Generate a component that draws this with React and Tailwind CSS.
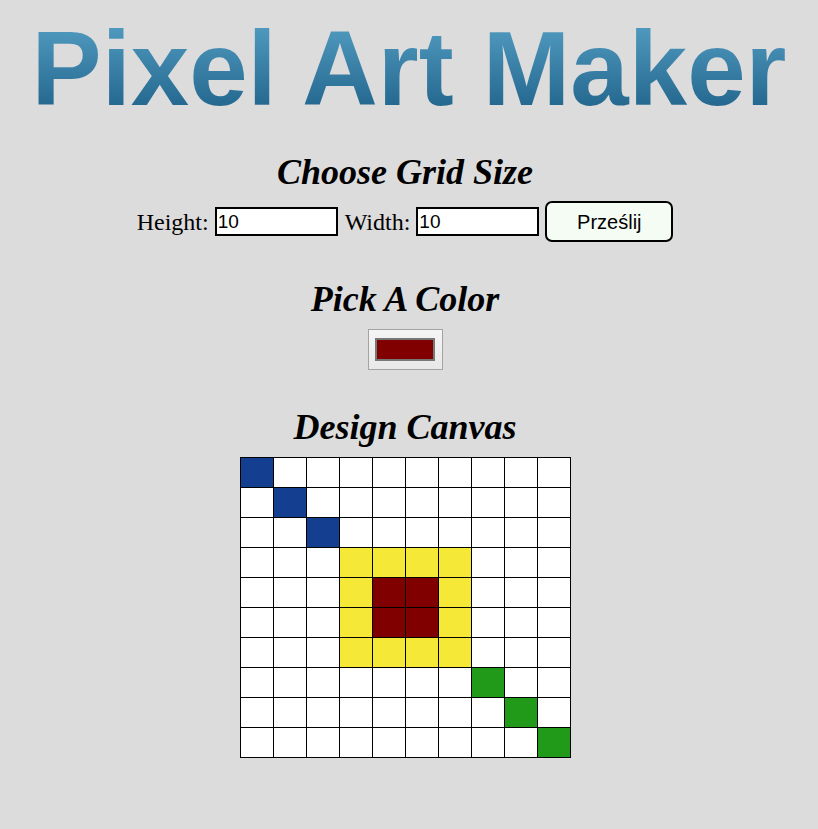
import React from "react";

const BLUE = "#143f91";
const YELLOW = "#f5e837";
const RED = "#800000";
const GREEN = "#219a19";

function cellColor(r, c) {
  if (r === c && r < 3) return BLUE;
  if (r === c && r > 6) return GREEN;
  if (r >= 4 && r <= 5 && c >= 4 && c <= 5) return RED;
  if (r >= 3 && r <= 6 && c >= 3 && c <= 6) return YELLOW;
  return "#ffffff";
}

const SANS = '"Liberation Sans", Arial, sans-serif';

export default function App() {
  const rows = Array.from({ length: 10 }, (_, r) => r);
  return (
    <div className="min-h-[829px] w-full bg-[#dcdcdc] flex flex-col items-center text-black" style={{ fontFamily: '"Liberation Serif", "Times New Roman", serif' }}>
      <h1
        className="mt-[8px] text-[105px] leading-[121px] font-bold bg-gradient-to-b from-[#5aa5c9] to-[#175b83] bg-clip-text text-transparent"
        style={{ fontFamily: SANS }}
      >
        Pixel Art Maker
      </h1>
      <div className="w-full pr-[8px] flex flex-col items-center">
        <h2 className="mt-[25px] text-[36px] leading-[37px] font-bold italic">Choose Grid Size</h2>
        <div className="mt-[10px] flex items-center text-[24px] leading-[28px]">
          <span>Height:</span>
          <div className="ml-[6px] w-[123px] h-[29px] border-2 border-black bg-white flex items-center pl-[1px] text-[19px] leading-none" style={{ fontFamily: SANS }}>10</div>
          <span className="ml-[7px]">Width:</span>
          <div className="ml-[6px] w-[123px] h-[29px] border-2 border-black bg-white flex items-center pl-[1px] text-[19px] leading-none" style={{ fontFamily: SANS }}>10</div>
          <button className="ml-[6px] w-[128px] h-[41px] border-2 border-black rounded-[7px] bg-[#f4fcf4] text-[20px] leading-none" style={{ fontFamily: SANS }}>Prześlij</button>
        </div>
        <h2 className="mt-[39px] text-[36px] leading-[37px] font-bold italic">Pick A Color</h2>
        <div className="mt-[11px] w-[75px] h-[41px] border border-[#a3a3a3] bg-gradient-to-b from-[#f5f5f5] to-[#e8e8e8] flex items-center justify-center">
          <div className="w-[60px] h-[23px] border-2 border-[#777777] bg-[#800000]"></div>
        </div>
        <h2 className="mt-[39px] text-[36px] leading-[37px] font-bold italic">Design Canvas</h2>
        <div className="mt-[11px] grid grid-cols-[repeat(10,32px)] auto-rows-[29px] gap-px p-px bg-black">
          {rows.map((r) =>
            rows.map((c) => (
              <div key={r + "-" + c} style={{ backgroundColor: cellColor(r, c) }}></div>
            ))
          )}
        </div>
      </div>
    </div>
  );
}
